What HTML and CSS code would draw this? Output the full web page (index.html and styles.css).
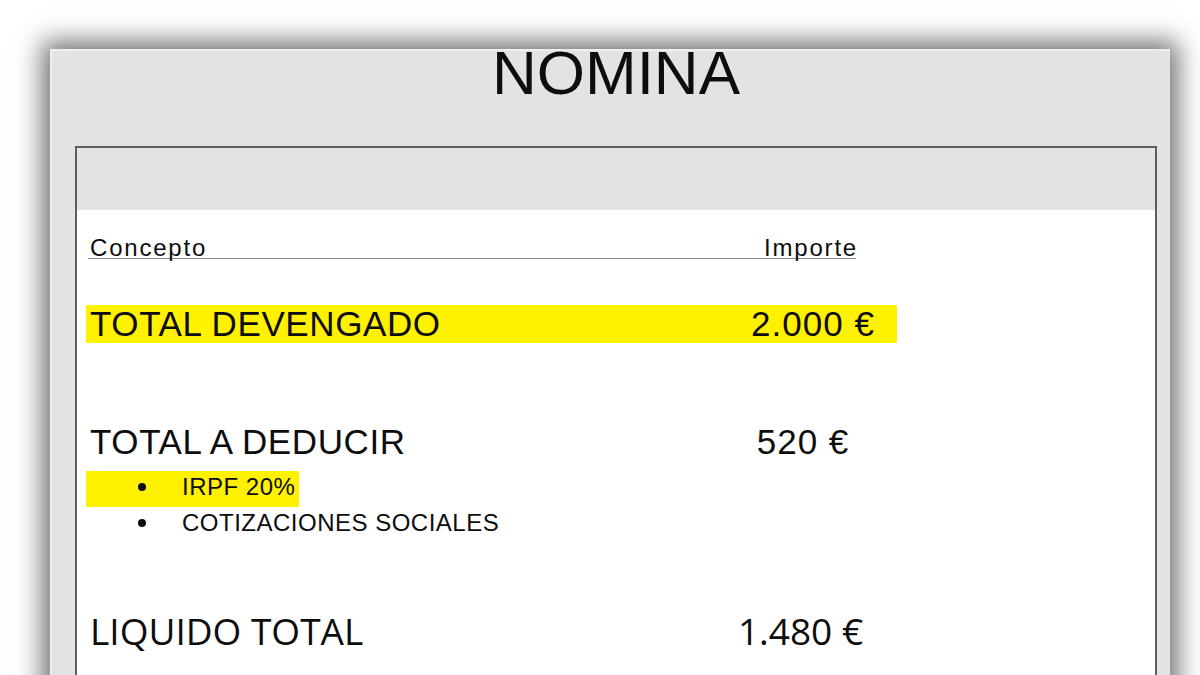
FILE: index.html
```html
<!DOCTYPE html>
<html lang="es">
<head>
<meta charset="utf-8">
<title>Nómina</title>
<link rel="stylesheet" href="styles.css">
</head>
<body>
<div class="page">
  <div class="card">
    <h1 class="title">NOMINA</h1>
    <div class="sheet">
      <div class="sheet-band"></div>
      <div class="sheet-body">
        <div class="head">
          <span class="head-label">Concepto</span>
          <span class="head-label">Importe</span>
        </div>
        <div class="row row-hl">
          <span class="label">TOTAL DEVENGADO</span>
          <span class="amount">2.000 €</span>
        </div>
        <div class="row row-deduct">
          <span class="label">TOTAL A DEDUCIR</span>
          <span class="amount amount-deduct">520 €</span>
        </div>
        <ul class="items">
          <li class="item item-hl">IRPF 20%</li>
          <li class="item">COTIZACIONES SOCIALES</li>
        </ul>
        <div class="row row-net">
          <span class="label">LIQUIDO TOTAL</span>
          <span class="amount amount-net">1.480 €</span>
        </div>
      </div>
    </div>
  </div>
</div>
</body>
</html>
```

FILE: styles.css
```css
* { box-sizing: border-box; }

html, body {
  margin: 0;
  padding: 0;
  background: #ffffff;
}

body {
  font-family: "Liberation Sans", Arial, sans-serif;
  color: #0d0d0d;
}

.page {
  width: 1200px;
  height: 675px;
  overflow: hidden;
  padding: 49px 30px 0 50px;
}

.card {
  width: 1120px;
  height: 720px;
  background: #e3e3e3;
  padding: 0 13px 0 25px;
  box-shadow: inset 2px 2px 0 #eeeeee, 0 0 24px 8px rgba(0, 0, 0, 0.55);
}

.title {
  margin: 0 0 49px;
  font-size: 62px;
  line-height: 48px;
  font-weight: 400;
  text-align: center;
  color: #0d0d0d;
}

.sheet {
  background: #ffffff;
  border: 2px solid #5e5e5e;
  height: 620px;
}

.sheet-band {
  height: 62px;
  background: #e3e3e3;
}

.sheet-body {
  padding: 28px 0 0 9px;
}

.head {
  display: flex;
  justify-content: space-between;
  width: 768px;
  margin-left: 2px;
  padding-left: 2px;
  border-bottom: 1px solid #8a8a8a;
  font-size: 24px;
  line-height: 20px;
  letter-spacing: 1.8px;
}

.head-label:last-child {
  margin-right: -2px;
}

.row {
  display: flex;
  align-items: baseline;
  width: 811px;
  padding-left: 4px;
  font-size: 35px;
  line-height: 38px;
  letter-spacing: 0.6px;
}

.row-hl {
  margin-top: 46px;
  background: #fff100;
}

.row-deduct {
  margin-top: 80px;
}

.label {
  flex: 1;
}

.amount {
  width: 168px;
  text-align: center;
  letter-spacing: 1px;
}

.amount-deduct {
  padding-right: 20px;
}

.items {
  list-style: none;
  margin: 10px 0 0;
  padding: 0;
}

.item {
  display: flex;
  align-items: center;
  gap: 36px;
  width: fit-content;
  padding: 0 4px 0 52px;
  font-size: 24px;
  line-height: 32px;
  letter-spacing: 0.5px;
}

.item::before {
  content: "";
  width: 8px;
  height: 8px;
  border-radius: 50%;
  background: #0d0d0d;
}

.item-hl {
  background: #fff100;
  padding-bottom: 4px;
}

.row-net {
  margin-top: 72px;
  font-family: "Open Sans", "Liberation Sans", sans-serif;
  font-size: 37px;
  line-height: 40px;
  letter-spacing: 0;
}

.amount-net {
  padding-right: 25px;
  letter-spacing: 0;
}
```
